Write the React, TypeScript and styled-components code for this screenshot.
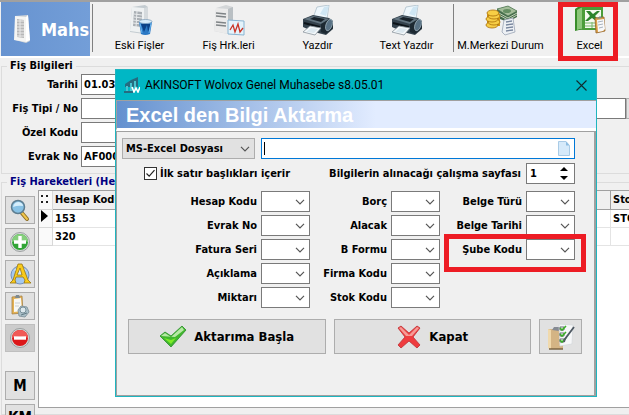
import React, { useState } from "react";
import styled, { createGlobalStyle } from "styled-components";

const TOOL_FONT = `Roboto, "Noto Sans", sans-serif`;
const LABEL_FONT = `"DejaVu Sans Condensed", "Noto Sans", sans-serif`;

const GlobalStyle = createGlobalStyle`
  *, *::before, *::after { box-sizing: border-box; }
  body { margin: 0; background: #f0f0f0; color: #000; font: 11px ${LABEL_FONT}; }
  button, input, select { font: inherit; color: inherit; margin: 0; border-radius: 0; }
  svg { flex: none; }
`;

/* ---------- main window ---------- */

const Window = styled.div`
  position: relative;
  display: flex;
  flex-direction: column;
  height: 100vh;
  overflow: hidden;
  background: #f0f0f0;
`;

const Toolbar = styled.header`
  display: flex;
  flex: none;
  height: 58px;
  padding-left: 1px;
  border-top: 2px solid #a0a0a0;
  border-bottom: 2px solid #fff;
`;

const ModuleBadge = styled.h1`
  display: flex;
  flex: none;
  align-items: center;
  gap: 10px;
  width: 89px;
  margin: 0;
  padding-left: 12px;
  overflow: hidden;
  background: linear-gradient(90deg, #6793d0, #739ed8);
  color: #fff;
  font: bold 18px ${LABEL_FONT};
`;

const Divider = styled.span`
  flex: none;
  width: 1px;
  height: 48px;
  margin: 2px 2px 0;
  background: #808080;
`;

const ToolButton = styled.button<{ $marked?: boolean }>`
  position: relative;
  display: flex;
  flex: none;
  flex-direction: column;
  align-items: center;
  gap: 1px;
  width: 89px;
  padding: 3px 0 0;
  border: 0;
  background: none;
  font: 11px/16px ${TOOL_FONT};
  white-space: nowrap;
  &::after {
    content: "";
    display: ${(p) => (p.$marked ? "block" : "none")};
    position: absolute;
    z-index: 1;
    inset: 0 16px -5px 13px;
    border: 5px solid #ed1c24;
  }
`;

const Group = styled.fieldset<{ $grow?: boolean }>`
  display: flex;
  flex: ${(p) => (p.$grow ? "1 1 0" : "none")};
  min-width: 0;
  min-height: 0;
  margin: 0 -4px 0 1px;
  padding: 0 0 6px 3px;
  border: 1px solid #dcdcdc;
`;

const Legend = styled.legend<{ $color?: string }>`
  margin-left: 2px;
  padding: 0 3px;
  color: ${(p) => p.$color ?? "#000"};
  font: bold 11px/16px ${LABEL_FONT};
  white-space: nowrap;
`;

const VoucherForm = styled.div`
  display: grid;
  flex: 1;
  grid-template-columns: 73px 1fr;
  gap: 3px;
  align-items: center;
  font-weight: bold;
`;

const RightLabel = styled.label`
  text-align: right;
  font-weight: bold;
  white-space: nowrap;
`;

const VoucherInput = styled.input<{ $wide?: boolean }>`
  width: ${(p) => (p.$wide ? "100%" : "240px")};
  height: 21px;
  padding: 0 2px;
  border: 1px solid #7a7a7a;
  background: #fff;
`;

const WideField = styled.div`
  display: flex;
  min-width: 0;
`;

const BrowseButton = styled.button`
  flex: none;
  width: 6px;
  height: 21px;
  padding: 0;
  border: 1px solid #adadad;
  background: #e1e1e1;
`;

const SideBar = styled.nav`
  display: flex;
  flex: none;
  flex-direction: column;
  gap: 4px;
  width: 33px;
  padding-top: 6px;
`;

const SideButton = styled.button<{ $pressed?: boolean; $spaced?: boolean }>`
  display: flex;
  flex: none;
  align-items: center;
  justify-content: center;
  width: 30px;
  height: ${(p) => (p.$spaced ? "29px" : "28px")};
  margin-top: ${(p) => (p.$spaced ? "15px" : "0")};
  padding: 0;
  border: 1px solid ${(p) => (p.$pressed ? "#bfbfbf" : "#adadad")};
  background: ${(p) => (p.$pressed ? "#cccccc" : "#e1e1e1")};
  font: bold 15px ${LABEL_FONT};
`;

const GridPane = styled.div`
  flex: 1;
  min-width: 0;
  border: 1px solid #a0a0a0;
  background: #fff;
`;

const Grid = styled.table`
  width: 100%;
  border-collapse: separate;
  border-spacing: 0;
  table-layout: fixed;
  font-weight: bold;
  th, td {
    height: 18px;
    padding: 0 0 0 2px;
    overflow: hidden;
    border-right: 1px solid #e4e4e4;
    border-bottom: 1px solid #e4e4e4;
    line-height: 16px;
    text-align: left;
    white-space: nowrap;
  }
  th {
    height: 19px;
    background: #f0f0f0;
    border-color: #a0a0a0;
  }
  th:first-child, td:first-child { background: #fafafa; border-color: #d8d8d8; }
`;

/* ---------- dialog ---------- */

const Dialog = styled.section`
  position: absolute;
  z-index: 2;
  top: 69px;
  left: 115px;
  display: flex;
  flex-direction: column;
  width: 482px;
  border: 1px solid #1fb5bf;
  background: #f0f0f0;
`;

const TitleBar = styled.div`
  display: flex;
  align-items: center;
  gap: 5px;
  height: 30px;
  padding: 0 9px 0 8px;
  background: #00b7c5;
  font: 12px ${TOOL_FONT};
`;

const TitleText = styled.span`
  flex: 1;
  white-space: nowrap;
`;

const CloseButton = styled.button`
  display: flex;
  padding: 0;
  border: 0;
  background: none;
`;

const Banner = styled.h2`
  height: 31px;
  margin: 0;
  padding-left: 9px;
  border-top: 1px solid #a0a0a0;
  border-left: 1px solid #a0a0a0;
  border-bottom: 3px solid #fff;
  background: linear-gradient(90deg, #6491cf, #e2ecff 54%);
  color: #fff;
  font: bold 20px/29px "Liberation Sans", Arial, sans-serif;
  white-space: nowrap;
`;

const Panel = styled.form`
  display: flex;
  flex-direction: column;
  margin: 0;
  padding: 6px 12px 41px 5px;
  border: 1px solid #a0a0a0;
  border-right-width: 2px;
`;

const SourceRow = styled.div`
  display: flex;
  gap: 6px;
  padding-right: 7px;
`;

const SelectFrame = styled.span<{ $tone?: string }>`
  display: grid;
  flex: none;
  width: ${(p) => (p.$tone ? "133px" : "49px")};
  height: 21px;
  border: 1px solid ${(p) => (p.$tone ? "#adadad" : "#7a7a7a")};
  background: ${(p) => p.$tone ?? "#fff"};
  > * { grid-area: 1 / 1; }
  > svg { align-self: center; justify-self: end; margin-right: 4px; pointer-events: none; }
`;

const NativeSelect = styled.select`
  width: 100%;
  min-width: 0;
  padding: 0 18px 0 3px;
  border: 0;
  outline: 0;
  appearance: none;
  background: transparent;
  font-weight: bold;
`;

const FileField = styled.span`
  display: flex;
  flex: 1;
  align-items: center;
  height: 21px;
  padding-right: 4px;
  border: 1px solid #0078d7;
  background: #fff;
`;

const FileInput = styled.input`
  flex: 1;
  min-width: 0;
  height: 13px;
  margin-left: 2px;
  padding: 0;
  border: 0;
  border-left: 1px solid #000;
  outline: 0;
`;

const OptionRow = styled.div`
  display: flex;
  align-items: center;
  gap: 3px;
  height: 21px;
  margin: 4px 7px 7px 22px;
  font-weight: bold;
  white-space: nowrap;
`;

const Tick = styled.input`
  flex: none;
  width: 13px;
  height: 13px;
  border: 1px solid #333;
  appearance: none;
  background: #fff;
  &:checked {
    background: #fff url("data:image/svg+xml,%3Csvg xmlns='http://www.w3.org/2000/svg' viewBox='0 0 11 11'%3E%3Cpath d='M1.5 5.5l2.7 2.7 5.3-6' fill='none' stroke='%23222' stroke-width='1.2'/%3E%3C/svg%3E");
  }
`;

const Spacer = styled.span`
  flex: 1;
`;

const Spinner = styled.span`
  display: flex;
  align-items: center;
  width: 49px;
  height: 21px;
  margin-left: 2px;
  padding: 0 6px 0 3px;
  border: 1px solid #7a7a7a;
  background: #fff;
`;

const SpinInput = styled.input`
  flex: 1;
  min-width: 0;
  padding: 0;
  border: 0;
  outline: 0;
  appearance: textfield;
  &::-webkit-inner-spin-button { display: none; }
`;

const SpinButtons = styled.span`
  display: grid;
  gap: 5px;
`;

const SpinButton = styled.button`
  display: flex;
  padding: 0;
  border: 0;
  background: none;
`;

const Mapping = styled.div`
  display: grid;
  grid-template-columns: 188px 130px 135px;
  align-items: start;
`;

const MappingColumn = styled.div`
  display: grid;
  gap: 3px;
`;

const MappingField = styled.div<{ $marked?: boolean }>`
  position: relative;
  display: flex;
  align-items: center;
  justify-content: flex-end;
  gap: 4px;
  &::after {
    content: "";
    display: ${(p) => (p.$marked ? "block" : "none")};
    position: absolute;
    inset: -5px -11px -12px 4px;
    border: 5px solid #ed1c24;
    pointer-events: none;
  }
`;

const Actions = styled.div`
  display: flex;
  gap: 8px;
  margin: 11px 0 0 6px;
`;

const ActionButton = styled.button<{ $compact?: boolean }>`
  display: flex;
  flex: ${(p) => (p.$compact ? "none" : "1")};
  align-items: center;
  justify-content: center;
  gap: 7px;
  width: ${(p) => (p.$compact ? "43px" : "auto")};
  height: 35px;
  padding: 0;
  border: 1px solid #adadad;
  background: #e1e1e1;
  font: bold 13px ${LABEL_FONT};
  white-space: nowrap;
`;

/* ---------- drawings ---------- */

const Chevron = () => (
  <svg width="10" height="6" viewBox="0 0 10 6" aria-hidden="true">
    <path d="M1 .8l4 4 4-4" fill="none" stroke="#555" strokeWidth="1.2" />
  </svg>
);

const BadgeIcon = () => (
  <svg width="18" height="30" viewBox="0 0 18 30" aria-hidden="true">
    <path d="M2 2l13-1 2 26-4 2-11-3z" fill="#cfd3d6" />
    <path d="M2 2l11 1v25L1 26z" fill="#f5f5f3" />
    <path d="M13 3l2-2 2 25-4 2z" fill="#fff" />
    <path d="M4 5l7 1v18l-7-1z" fill="#b7b7b7" />
    <path d="M4 7h7M4 10h7M4 13h7M4 16h7M4 19h7M4 22h7M7 5v18" stroke="#e9e9e9" />
  </svg>
);

const ArchiveIcon = () => (
  <svg width="32" height="32" viewBox="0 0 32 32" aria-hidden="true">
    <path d="M8 2l13-2 3 2v25l-4 2-14-2z" fill="#c3cbd0" />
    <path d="M8 2l12 1v25L6 26z" fill="#eef1f2" />
    <path d="M20 3l4-1v24l-4 2z" fill="#d5dadd" />
    <path d="M10 6l8 1v15l-9-1z" fill="#a9afb4" />
    <path d="M10 9l8 1M10 12l8 1M9 15l9 1M9 18l9 1M13 6l-1 16" stroke="#e8ebed" />
    <path d="M15 17h13l-2 12q-5 2-9 0z" fill="#2a78c4" />
    <path d="M17 19l3 8 3-7 1 7 3-8z" fill="#0b4288" />
    <path d="M16 18l2 10M27 18l-2 10" fill="none" stroke="#67b4ef" />
    <ellipse cx="21.500" cy="16.500" rx="6.500" ry="2" fill="#d9eefb" stroke="#7b9ab5" strokeWidth=".7" />
  </svg>
);

const MovementsIcon = () => (
  <svg width="32" height="32" viewBox="0 0 32 32" aria-hidden="true">
    <path d="M3 3l10-3 7 2v23l-5 4-14-3z" fill="#d3d6d8" />
    <path d="M3 3l12 1v25L1 26z" fill="#ebebeb" />
    <path d="M15 4l5-2v23l-5 4z" fill="#b9bfc3" />
    <path d="M3 8l10 1M3 11l10 1M3 17l10 1M3 20l10 1" stroke="#7f8487" strokeWidth="1.6" />
    <path d="M15 15l16 1v14l-16-1z" fill="#e4f3fb" stroke="#88b4d2" />
    <path d="M17 25l3-5 2 7 3-8 2 8 3-4" fill="none" stroke="#cb3324" strokeWidth="1.3" />
  </svg>
);

const PrinterIcon = () => (
  <svg width="32" height="32" viewBox="0 0 32 32" aria-hidden="true">
    <path d="M11 13l4-11L27 0l-2 14z" fill="#eef7fc" stroke="#a5b9c6" strokeWidth=".7" />
    <path d="M18 9l4-7 5-1-3 10z" fill="#cfe6f3" />
    <path d="M1 14l10-4 16 3 4 3v8l-7 6-12-3-11-5z" fill="#34424d" />
    <path d="M2 14l9-3 16 3-8 5z" fill="#627480" />
    <path d="M8 14l4-2 11 2-4 3z" fill="#18222a" />
    <path d="M19 19l9-5 3 3v6l-7 6-5-2z" fill="#1d2932" />
    <ellipse cx="27" cy="20" rx="3" ry="6" fill="#587184" stroke="#96a9b5" strokeWidth=".8" transform="rotate(20 27 20)" />
    <path d="M2 18l16 4" stroke="#0c1318" strokeWidth="2" />
    <path d="M1 27l7-6 11 2-6 7z" fill="#f5f9fb" stroke="#8b969e" strokeWidth=".8" />
    <path d="M4 27l5-4 7 1-4 4z" fill="#dce8ef" />
  </svg>
);

const MoneyIcon = () => (
  <svg width="32" height="32" viewBox="0 0 32 32" aria-hidden="true">
    <path d="M12 4l11-3 9 5v6l-9 5-11-4z" fill="#446b4b" />
    <path d="M12 4l11-3 9 5-9 5z" fill="#a4bd9a" stroke="#4d7752" strokeWidth=".7" />
    <path d="M12 7l11 6 9-5M12 9l11 6 9-5" fill="none" stroke="#c1d1b6" />
    <ellipse cx="22" cy="6" rx="4" ry="2" fill="#648e62" />
    <path d="M2 9h13v12H2z" fill="#d69b16" />
    <g fill="#f7ce45" stroke="#a86d09" strokeWidth=".8">
      <ellipse cx="7" cy="20" rx="6" ry="3" />
      <ellipse cx="9" cy="17" rx="6" ry="3" />
      <ellipse cx="7" cy="14" rx="6" ry="3" />
      <ellipse cx="9" cy="11" rx="6" ry="3" />
      <ellipse cx="8" cy="8" rx="6" ry="3" />
    </g>
    <path d="M19 15l9-2 2 14-10 3-3-3z" fill="#edf0f4" stroke="#9ba5b5" strokeWidth=".8" />
    <path d="M21 17l6-1M21 20l7-1M21 23l7-1M21 26l7-1" stroke="#78869e" strokeWidth="1.3" />
  </svg>
);

const ExcelIcon = () => (
  <svg width="32" height="32" viewBox="0 0 32 32" aria-hidden="true">
    <path d="M1 4q5-4 11-4l1 25q-6-1-12 1z" fill="#398d2b" />
    <path d="M3 5q4-3 8-3v22q-4-1-8 1z" fill="#8cc67a" />
    <path d="M8 2h21v23H8z" fill="#4b9d39" />
    <path d="M11 5h16v18H11z" fill="#f4faef" />
    <path d="M11 18h14M11 21h14M18 17v6" stroke="#78b56a" />
    <path d="M12 6h4l3 3 4-3h3l-5 5 5 5h-4l-4-3-4 3h-3l5-5z" fill="#2d842c" />
    <path d="M21 13l9-1 1 14-9 2z" fill="#dca148" stroke="#936227" strokeWidth=".8" />
    <path d="M23 15l7-1 1 10-2 2-5 1z" fill="#f7f8fa" />
    <path d="M24 17l5-1M24 20l5-1M25 23l4-1" stroke="#a9b2bd" />
    <path d="M23 14l3-3 2 2z" fill="#808c94" />
  </svg>
);

const MagnifierIcon = () => (
  <svg width="22" height="24" viewBox="0 0 22 24" aria-hidden="true">
    <path d="M12 14l6 7" stroke="#8f6f23" strokeWidth="4" strokeLinecap="round" />
    <path d="M13 15l5 6" stroke="#f0c64c" strokeWidth="2" strokeLinecap="round" />
    <circle cx="9" cy="9" r="6.5" fill="#88c2e5" stroke="#5d7d90" strokeWidth="1.5" />
    <path d="M4 9q1-5 6-5 4 1 4 4-5-1-10 1z" fill="#d5eefb" />
  </svg>
);

const RoundIcon = ({ kind }: { kind: "add" | "remove" }) => (
  <svg width="22" height="22" viewBox="0 0 22 22" aria-hidden="true">
    <circle cx="11" cy="11" r="9.5" fill="#d7dada" stroke="#8c9090" strokeWidth=".8" />
    <circle cx="11" cy="11" r="8" fill={kind === "add" ? "#31a436" : "#dc1719"} />
    <path d="M3 11a8 8 0 0116 0q-8-4-16 0z" fill={kind === "add" ? "#86cf7d" : "#f05a56"} />
    <path d={kind === "add" ? "M11 5v12M5 11h12" : "M5 11h12"} stroke="#fff" strokeWidth="3.4" />
  </svg>
);

const CompassIcon = () => (
  <svg width="22" height="24" viewBox="0 0 22 24" aria-hidden="true">
    <circle cx="11" cy="13" r="9" fill="#a5c8ee" stroke="#7590bc" />
    <path d="M5 8q6-5 12 0-5 5-12 0z" fill="#e9f5ff" />
    <path d="M1 21h6l-1-3 1-3h7l2 3-1 3h7l-3-3L13 2H9L4 18z" fill="#f9cb1b" stroke="#967313" strokeWidth=".8" />
    <path d="M8 13l3-7 2 7z" fill="#d9eaf9" stroke="#967313" strokeWidth=".8" />
  </svg>
);

const ClipboardIcon = () => (
  <svg width="22" height="24" viewBox="0 0 22 24" aria-hidden="true">
    <path d="M3 3l10-1 1 17-11 1z" fill="#e5b252" stroke="#a58148" strokeWidth=".8" />
    <path d="M5 5l7-1 1 13-8 1z" fill="#f8f8f4" />
    <path d="M6 4l1-3h3l1 3z" fill="#7e8a91" />
    <path d="M6 9h5M6 12h4" stroke="#c8ced2" />
    <path d="M9 16l3-4 6 1 2 5-4 5-6-1z" fill="#aabfc8" stroke="#8799a1" />
    <circle cx="14" cy="16" r="3" fill="#dce8ed" stroke="#78909b" />
    <path d="M12 21l6-2" stroke="#627b85" />
  </svg>
);

const AppIcon = () => (
  <svg width="16" height="16" viewBox="0 0 16 16" aria-hidden="true">
    <path d="M1 7l6-4 7-3v10H1z" fill="#256c80" />
    <path d="M2 9h2v5H2zM6 6h2v8H6zM10 4h2v10h-2z" fill="#48c3cf" />
    <path d="M0 15h9" stroke="#256c80" strokeWidth="2" />
    <path d="M8 10l2 5 2-4 2 4 2-5" fill="none" stroke="#fff" strokeWidth="1.6" />
  </svg>
);

const CloseIcon = () => (
  <svg width="11" height="11" viewBox="0 0 11 11" aria-hidden="true">
    <path d="M.5.5l10 10M10.5.5l-10 10" stroke="#102a2d" strokeWidth="1.1" />
  </svg>
);

const PageIcon = () => (
  <svg width="12" height="15" viewBox="0 0 12 15" aria-hidden="true">
    <path d="M.5.5H8l3.5 4v10H.5z" fill="#d6eafa" stroke="#a9cbe6" />
    <path d="M8 .5v4h3.5z" fill="#8dbde2" />
  </svg>
);

const CheckIcon = () => (
  <svg width="28" height="24" viewBox="0 0 28 24" aria-hidden="true">
    <path d="M1 11l5-4 6 4L23 1l4 4-15 17z" fill="#42b72e" stroke="#288d29" strokeWidth=".8" />
    <path d="M2 11l4-3 6 4L23 2l2 3-9 7z" fill="#b7e8a6" />
    <path d="M5 13l7 6 5-6-5 2z" fill="#7ceb28" />
  </svg>
);

const CrossIcon = () => (
  <svg width="26" height="26" viewBox="0 0 26 26" aria-hidden="true">
    <path d="M2 4l3-2 8 7 8-7 3 2-7 9 7 8-3 3-8-7-8 7-3-3 7-8z" fill="#ef3c3f" stroke="#bd3034" strokeWidth=".8" strokeLinejoin="round" />
    <path d="M3 4l2-1 8 8 8-8 2 1-7 8h-6z" fill="#f69b96" />
  </svg>
);

const ChecklistIcon = () => (
  <svg width="28" height="28" viewBox="0 0 28 28" aria-hidden="true">
    <path d="M1 6h15v20H2z" fill="#d4b484" />
    <path d="M1 6l3 1v19l-3-1z" fill="#f0d9ac" />
    <path d="M2 26h14" stroke="#755e3b" strokeWidth="1.4" />
    <path d="M5 7l2-3h5v4z" fill="#858a93" />
    <path d="M12 1l14 1-1 19-12 2z" fill="#f6f7f8" stroke="#d5d9dc" strokeWidth=".8" />
    <path d="M13 4h4v3h-4zM13 10h4v3h-4zM13 16h4v3h-4z" fill="#fff" stroke="#667" />
    <path d="M13 5l2 2 4-4M13 11l2 2 4-4M13 17l2 2 4-4" fill="none" stroke="#3bae27" strokeWidth="1.6" />
    <path d="M27 4l-9 12-1 3" fill="none" stroke="#4e5862" strokeWidth="1.8" />
  </svg>
);

const RowMarker = () => (
  <svg width="7" height="12" viewBox="0 0 7 12" aria-hidden="true">
    <path d="M0 0l7 6-7 6z" fill="#000" />
  </svg>
);

const DotsIcon = () => (
  <svg width="7" height="8" viewBox="0 0 7 8" aria-hidden="true">
    <path d="M0 0h2v2H0zM5 0h2v2H5zM0 6h2v2H0zM5 6h2v2H5z" fill="#222" />
  </svg>
);

const Triangle = ({ down }: { down?: boolean }) => (
  <svg width="8" height="4" viewBox="0 0 8 4" aria-hidden="true">
    <path d={down ? "M0 0h8L4 4z" : "M0 4h8L4 0z"} fill="#000" />
  </svg>
);

/* ---------- page ---------- */

const MAPPING = [
  ["Hesap Kodu", "Evrak No", "Fatura Seri", "Açıklama", "Miktarı"],
  ["Borç", "Alacak", "B Formu", "Firma Kodu", "Stok Kodu"],
  ["Belge Türü", "Belge Tarihi", "Şube Kodu"],
];

function ImportDialog() {
  const [sheet, setSheet] = useState(1);
  return (
    <Dialog role="dialog" aria-labelledby="dialog-title">
      <TitleBar>
        <AppIcon />
        <TitleText id="dialog-title">AKINSOFT Wolvox Genel Muhasebe s8.05.01</TitleText>
        <CloseButton type="button" aria-label="Pencereyi kapat"><CloseIcon /></CloseButton>
      </TitleBar>
      <Banner>Excel den Bilgi Aktarma</Banner>
      <Panel onSubmit={(e) => e.preventDefault()}>
        <SourceRow>
          <SelectFrame $tone="#e1e1e1">
            <NativeSelect aria-label="Kaynak türü"><option>MS-Excel Dosyası</option></NativeSelect>
            <Chevron />
          </SelectFrame>
          <FileField>
            <FileInput type="text" aria-label="Dosya" />
            <PageIcon />
          </FileField>
        </SourceRow>
        <OptionRow>
          <Tick type="checkbox" id="headers" defaultChecked />
          <label htmlFor="headers">İlk satır başlıkları içerir</label>
          <Spacer />
          <label htmlFor="sheet">Bilgilerin alınacağı çalışma sayfası</label>
          <Spinner>
            <SpinInput id="sheet" type="number" value={sheet} onChange={(e) => setSheet(Number(e.target.value))} />
            <SpinButtons>
              <SpinButton type="button" aria-label="Artır" onClick={() => setSheet(sheet + 1)}><Triangle /></SpinButton>
              <SpinButton type="button" aria-label="Azalt" onClick={() => setSheet(Math.max(1, sheet - 1))}><Triangle down /></SpinButton>
            </SpinButtons>
          </Spinner>
        </OptionRow>
        <Mapping>
          {MAPPING.map((fields, column) => (
            <MappingColumn key={column}>
              {fields.map((name, row) => (
                <MappingField key={name} $marked={name === "Şube Kodu"}>
                  <RightLabel htmlFor={`map-${column}-${row}`}>{name}</RightLabel>
                  <SelectFrame>
                    <NativeSelect id={`map-${column}-${row}`}><option /></NativeSelect>
                    <Chevron />
                  </SelectFrame>
                </MappingField>
              ))}
            </MappingColumn>
          ))}
        </Mapping>
        <Actions>
          <ActionButton type="submit"><CheckIcon />Aktarıma Başla</ActionButton>
          <ActionButton type="button"><CrossIcon />Kapat</ActionButton>
          <ActionButton type="button" $compact aria-label="Şablonlar"><ChecklistIcon /></ActionButton>
        </Actions>
      </Panel>
    </Dialog>
  );
}

export default function App() {
  return (
    <>
      <GlobalStyle />
      <Window>
        <Toolbar>
          <ModuleBadge><BadgeIcon />Mahs</ModuleBadge>
          <Divider />
          <ToolButton><ArchiveIcon />Eski Fişler</ToolButton>
          <ToolButton><MovementsIcon />Fiş Hrk.leri</ToolButton>
          <ToolButton><PrinterIcon />Yazdır</ToolButton>
          <ToolButton><PrinterIcon />Text Yazdır</ToolButton>
          <Divider />
          <ToolButton><MoneyIcon />M.Merkezi Durum</ToolButton>
          <ToolButton $marked><ExcelIcon />Excel</ToolButton>
        </Toolbar>

        <Group>
          <Legend>Fiş Bilgileri</Legend>
          <VoucherForm>
            <RightLabel htmlFor="date">Tarihi</RightLabel>
            <VoucherInput id="date" defaultValue="01.03" />
            <RightLabel htmlFor="type">Fiş Tipi / No</RightLabel>
            <WideField>
              <VoucherInput id="type" $wide />
              <BrowseButton type="button" aria-label="Fiş seç" />
            </WideField>
            <RightLabel htmlFor="special">Özel Kodu</RightLabel>
            <VoucherInput id="special" />
            <RightLabel htmlFor="document">Evrak No</RightLabel>
            <VoucherInput id="document" defaultValue="AF000" />
          </VoucherForm>
        </Group>

        <Group $grow>
          <Legend $color="#000080">Fiş Hareketleri (He</Legend>
          <SideBar>
            <SideButton aria-label="Ara"><MagnifierIcon /></SideButton>
            <SideButton aria-label="Ekle"><RoundIcon kind="add" /></SideButton>
            <SideButton aria-label="Düzenle"><CompassIcon /></SideButton>
            <SideButton aria-label="Yapıştır"><ClipboardIcon /></SideButton>
            <SideButton aria-label="Sil" $pressed><RoundIcon kind="remove" /></SideButton>
            <SideButton $spaced>M</SideButton>
            <SideButton>KM</SideButton>
          </SideBar>
          <GridPane>
            <Grid>
              <colgroup>
                <col width="14" />
                <col />
                <col width="20" />
              </colgroup>
              <thead>
                <tr><th><DotsIcon /></th><th>Hesap Kodu</th><th>Sto</th></tr>
              </thead>
              <tbody>
                <tr><td><RowMarker /></td><td>153</td><td>STO</td></tr>
                <tr><td /><td>320</td><td /></tr>
              </tbody>
            </Grid>
          </GridPane>
        </Group>

        <ImportDialog />
      </Window>
    </>
  );
}
